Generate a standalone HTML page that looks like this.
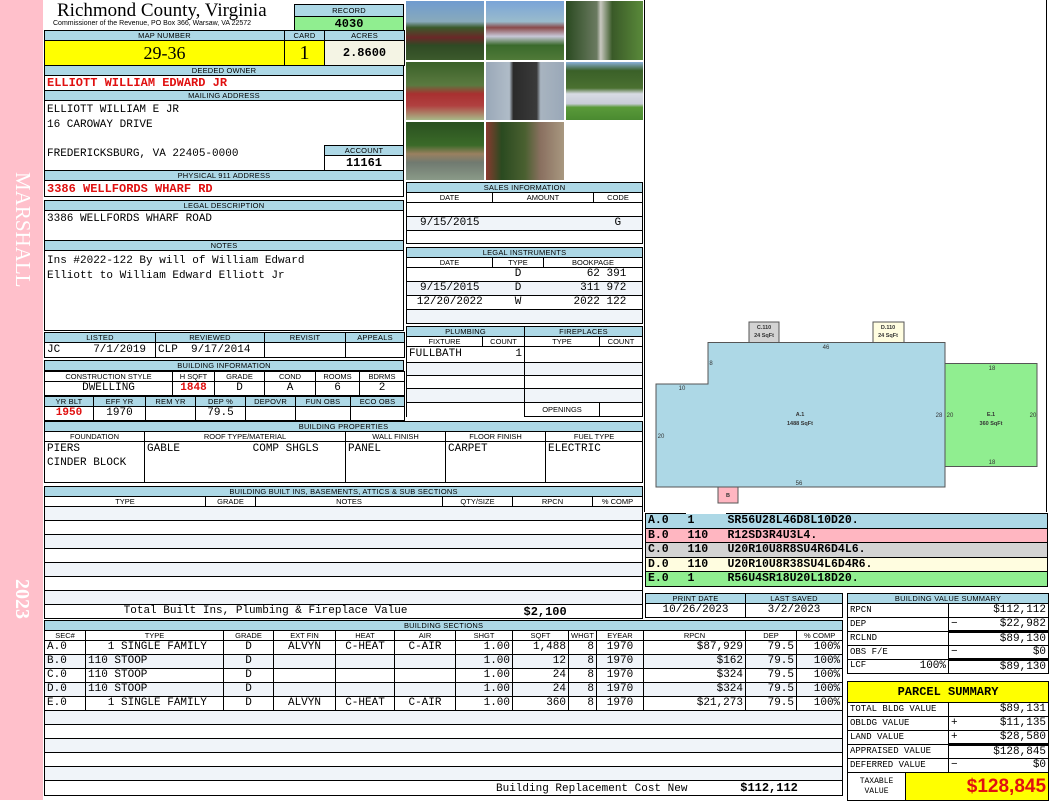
<!DOCTYPE html>
<html><head><meta charset="utf-8"><style>
*{box-sizing:border-box;margin:0;padding:0}
body{width:1050px;height:800px;position:relative;background:#fff;overflow:hidden;font-family:"Liberation Mono",monospace;font-size:11px;color:#000}
.a{position:absolute}
table{border-collapse:collapse;table-layout:fixed;width:100%}
td{border:1px solid #000;padding:0 2px;white-space:nowrap;overflow:hidden;vertical-align:middle;line-height:1}
.h td,td.h{background:#add8e6;font:7.5px "Liberation Sans",sans-serif;text-align:center;letter-spacing:.2px}
.s td{font:7.5px "Liberation Sans",sans-serif;text-align:center}
.r{text-align:right}.c{text-align:center}
.red{color:#e01010;font-weight:bold}
.lt td{background:#f0f4f9}
.ph{position:absolute;border:1px solid #fff}
.vt{position:absolute;writing-mode:vertical-rl;color:#fff;font-family:"Liberation Serif",serif;left:10px}
</style></head><body>
<div class="a" style="left:0;top:0;width:43px;height:800px;background:#ffc0cb"></div>
<div class="vt" style="top:172px;font-size:21px;letter-spacing:0px">MARSHALL</div>
<div class="vt" style="top:579px;font-size:20px;font-weight:bold">2023</div>

<div class="a" style="left:57px;top:1px;font:19px 'Liberation Serif',serif;line-height:20px">Richmond County, Virginia</div>
<div class="a" style="left:53px;top:20px;font:7px 'Liberation Sans',sans-serif">Commissioner of the Revenue, PO Box 366, Warsaw, VA 22572</div>
<div class="a" style="left:294px;top:4px;width:110px"><table><tr class="h" style="height:12px"><td>RECORD</td></tr><tr style="height:14px"><td class="c" style="background:#90ee90;font-weight:bold;font-size:12px">4030</td></tr></table></div>
<div class="a" style="left:44px;top:30px;width:360px"><table><col style="width:240px"><col style="width:40px"><col style="width:80px">
<tr class="h" style="height:10px"><td>MAP NUMBER</td><td>CARD</td><td>ACRES</td></tr>
<tr style="height:25px"><td class="c" style="background:#ffff00;font:18px 'Liberation Serif',serif">29-36</td><td class="c" style="background:#ffff00;font:20px 'Liberation Serif',serif">1</td><td class="c" style="background:#f4f4e4;font-weight:bold;font-size:12px">2.8600</td></tr></table></div>
<div class="a" style="left:44px;top:65px;width:360px"><table>
<tr class="h" style="height:10px"><td>DEEDED OWNER</td></tr>
<tr style="height:15px"><td class="red" style="font-size:12px">ELLIOTT WILLIAM EDWARD JR</td></tr>
<tr class="h" style="height:10px"><td>MAILING ADDRESS</td></tr>
<tr style="height:70px"><td></td></tr></table></div>
<div class="a" style="left:47px;top:103px;line-height:15px">ELLIOTT WILLIAM E JR<br>16 CAROWAY DRIVE</div>
<div class="a" style="left:47px;top:148px">FREDERICKSBURG, VA 22405-0000</div>
<div class="a" style="left:324px;top:145px;width:80px"><table><tr class="h" style="height:10px"><td>ACCOUNT</td></tr><tr style="height:15px"><td class="c" style="font-weight:bold;font-size:12px">11161</td></tr></table></div>
<div class="a" style="left:44px;top:170px;width:360px"><table><tr class="h" style="height:10px"><td>PHYSICAL 911 ADDRESS</td></tr><tr style="height:16px"><td class="red" style="font-size:12px">3386 WELLFORDS WHARF RD</td></tr></table></div>
<div class="a" style="left:44px;top:200px;width:360px"><table><tr class="h" style="height:10px"><td>LEGAL DESCRIPTION</td></tr><tr style="height:30px"><td style="vertical-align:top;padding-top:3px">3386 WELLFORDS WHARF ROAD</td></tr>
<tr class="h" style="height:10px"><td>NOTES</td></tr><tr style="height:80px"><td style="vertical-align:top;padding-top:3px;line-height:15px">Ins #2022-122 By will of William Edward<br>Elliott to William Edward Elliott Jr</td></tr></table></div>
<div class="a" style="left:44px;top:332px;width:360px"><table><col style="width:111px"><col style="width:109px"><col style="width:81px"><col style="width:59px">
<tr class="h" style="height:10px"><td>LISTED</td><td>REVIEWED</td><td>REVISIT</td><td>APPEALS</td></tr>
<tr style="height:15px"><td>JC&nbsp;&nbsp;&nbsp;&nbsp;&nbsp;7/1/2019</td><td>CLP&nbsp;&nbsp;9/17/2014</td><td></td><td></td></tr></table></div>
<div class="a" style="left:44px;top:360px;width:360px"><table><tr class="h" style="height:10px"><td>BUILDING INFORMATION</td></tr></table>
<table><col style="width:128px"><col style="width:42px"><col style="width:50px"><col style="width:51px"><col style="width:44px"><col style="width:45px">
<tr class="s" style="height:10px"><td>CONSTRUCTION STYLE</td><td>H SQFT</td><td>GRADE</td><td>COND</td><td>ROOMS</td><td>BDRMS</td></tr>
<tr class="c" style="height:14px"><td class="c">DWELLING</td><td class="c red">1848</td><td class="c">D</td><td class="c">A</td><td class="c">6</td><td class="c">2</td></tr></table>
<table><col style="width:49px"><col style="width:52px"><col style="width:50px"><col style="width:50px"><col style="width:50px"><col style="width:55px"><col style="width:54px">
<tr class="h" style="height:10px"><td>YR BLT</td><td>EFF YR</td><td>REM YR</td><td>DEP %</td><td>DEPOVR</td><td>FUN OBS</td><td>ECO OBS</td></tr>
<tr style="height:14px"><td class="c red">1950</td><td class="c">1970</td><td></td><td class="c">79.5</td><td></td><td></td><td></td></tr></table></div>
<div class="a" style="left:44px;top:421px;width:598px"><table><col style="width:100px"><col style="width:201px"><col style="width:100px"><col style="width:100px"><col style="width:97px">
<tr class="h" style="height:10px"><td colspan="5">BUILDING PROPERTIES</td></tr>
<tr class="s" style="height:10px"><td>FOUNDATION</td><td>ROOF TYPE/MATERIAL</td><td>WALL FINISH</td><td>FLOOR FINISH</td><td>FUEL TYPE</td></tr>
<tr style="height:41px;vertical-align:top"><td style="vertical-align:top;line-height:14px">PIERS<br>CINDER BLOCK</td><td style="vertical-align:top;line-height:14px">GABLE&nbsp;&nbsp;&nbsp;&nbsp;&nbsp;&nbsp;&nbsp;&nbsp;&nbsp;&nbsp;&nbsp;COMP SHGLS</td><td style="vertical-align:top;line-height:14px">PANEL</td><td style="vertical-align:top;line-height:14px">CARPET</td><td style="vertical-align:top;line-height:14px">ELECTRIC</td></tr></table></div>
<div class="a" style="left:44px;top:486px;width:598px"><table><col style="width:161px"><col style="width:50px"><col style="width:187px"><col style="width:70px"><col style="width:80px"><col style="width:50px">
<tr class="h" style="height:10px"><td colspan="6">BUILDING BUILT INS, BASEMENTS, ATTICS &amp; SUB SECTIONS</td></tr>
<tr class="s" style="height:10px"><td>TYPE</td><td>GRADE</td><td>NOTES</td><td>QTY/SIZE</td><td>RPCN</td><td>% COMP</td></tr>
<tr class="lt" style="height:14px"><td colspan="6"></td></tr><tr style="height:14px"><td colspan="6"></td></tr><tr class="lt" style="height:14px"><td colspan="6"></td></tr><tr style="height:14px"><td colspan="6"></td></tr><tr class="lt" style="height:14px"><td colspan="6"></td></tr><tr style="height:14px"><td colspan="6"></td></tr><tr class="lt" style="height:14px"><td colspan="6"></td></tr>
<tr style="height:14px"><td colspan="4" style="text-align:right;padding-right:105px;border-right:none">Total Built Ins, Plumbing &amp; Fireplace Value</td><td colspan="2" style="border-left:none;font-weight:bold;font-size:12px;padding-left:11px">$2,100</td></tr></table></div>
<div class="a" style="left:44px;top:620px;width:798px"><table>
<col style="width:41px"><col style="width:138px"><col style="width:50px"><col style="width:62px"><col style="width:59px"><col style="width:61px"><col style="width:57px"><col style="width:56px"><col style="width:28px"><col style="width:47px"><col style="width:102px"><col style="width:51px"><col style="width:46px">
<tr class="h" style="height:10px"><td colspan="13">BUILDING SECTIONS</td></tr>
<tr class="s" style="height:10px"><td>SEC#</td><td>TYPE</td><td>GRADE</td><td>EXT FIN</td><td>HEAT</td><td>AIR</td><td>SHGT</td><td>SQFT</td><td>WHGT</td><td>EYEAR</td><td>RPCN</td><td>DEP</td><td>% COMP</td></tr>
<tr style="height:14px"><td>A.0</td><td>&nbsp;&nbsp;&nbsp;1 SINGLE FAMILY</td><td class="c">D</td><td class="c">ALVYN</td><td class="c">C-HEAT</td><td class="c">C-AIR</td><td class="r">1.00</td><td class="r">1,488</td><td class="r">8</td><td class="c">1970</td><td class="r">$87,929</td><td class="r">79.5</td><td class="r">100%</td></tr>
<tr class="lt" style="height:14px"><td>B.0</td><td>110 STOOP</td><td class="c">D</td><td></td><td></td><td></td><td class="r">1.00</td><td class="r">12</td><td class="r">8</td><td class="c">1970</td><td class="r">$162</td><td class="r">79.5</td><td class="r">100%</td></tr>
<tr style="height:14px"><td>C.0</td><td>110 STOOP</td><td class="c">D</td><td></td><td></td><td></td><td class="r">1.00</td><td class="r">24</td><td class="r">8</td><td class="c">1970</td><td class="r">$324</td><td class="r">79.5</td><td class="r">100%</td></tr>
<tr class="lt" style="height:14px"><td>D.0</td><td>110 STOOP</td><td class="c">D</td><td></td><td></td><td></td><td class="r">1.00</td><td class="r">24</td><td class="r">8</td><td class="c">1970</td><td class="r">$324</td><td class="r">79.5</td><td class="r">100%</td></tr>
<tr style="height:14px"><td>E.0</td><td>&nbsp;&nbsp;&nbsp;1 SINGLE FAMILY</td><td class="c">D</td><td class="c">ALVYN</td><td class="c">C-HEAT</td><td class="c">C-AIR</td><td class="r">1.00</td><td class="r">360</td><td class="r">8</td><td class="c">1970</td><td class="r">$21,273</td><td class="r">79.5</td><td class="r">100%</td></tr>
<tr class="lt" style="height:14px"><td colspan="13"></td></tr><tr style="height:14px"><td colspan="13"></td></tr><tr class="lt" style="height:14px"><td colspan="13"></td></tr><tr style="height:14px"><td colspan="13"></td></tr><tr class="lt" style="height:14px"><td colspan="13"></td></tr>
<tr style="height:15px"><td colspan="13" style="padding-left:451px">Building Replacement Cost New&nbsp;&nbsp;&nbsp;&nbsp;&nbsp;&nbsp;&nbsp;&nbsp;<b style="font-size:12px">$112,112</b></td></tr></table></div>

<div class="ph" style="left:405px;top:0;width:80px;height:61px;background:linear-gradient(#6f9bd0 0,#8ab 35%,#3a5a2a 45%,#6a2828 62%,#2f4a24 75%,#3c5a2c)"></div>
<div class="ph" style="left:485px;top:0;width:80px;height:61px;background:linear-gradient(#7aa4d8 0,#9bc 35%,#8a4a4a 45%,#c8c8d8 60%,#3a6a2c 75%,#507a38)"></div>
<div class="ph" style="left:565px;top:0;width:79px;height:61px;background:linear-gradient(90deg,#2a4a20,#6a7a60 40%,#c8c8c0 45%,#3a5a28 60%,#5a8a3a)"></div>
<div class="ph" style="left:405px;top:61px;width:80px;height:60px;background:linear-gradient(#3a6028 0,#5a7a40 40%,#a83030 55%,#b04040 75%,#a8b888)"></div>
<div class="ph" style="left:485px;top:61px;width:80px;height:60px;background:linear-gradient(90deg,#9aa8b8,#b0bcc8 30%,#2a2a2a 35%,#3a3a3a 65%,#a8b4c0 70%,#9aa8b8)"></div>
<div class="ph" style="left:565px;top:61px;width:79px;height:60px;background:linear-gradient(#8ab0d8 0,#3a6028 15%,#4a7030 45%,#d8dce4 55%,#c8ccd8 72%,#5a9a3a 78%,#4a8a30)"></div>
<div class="ph" style="left:405px;top:121px;width:80px;height:60px;background:linear-gradient(#2a5020 0,#3a6a28 40%,#9a8060 55%,#707a70 70%,#8a9a88)"></div>
<div class="ph" style="left:485px;top:121px;width:80px;height:60px;background:linear-gradient(90deg,#8a3a30,#2a4a20 20%,#4a6030 50%,#8a7060 70%,#a89880)"></div>

<div class="a" style="left:406px;top:182px;width:236px"><table><col style="width:86px"><col style="width:101px"><col style="width:49px">
<tr class="h" style="height:10px"><td colspan="3">SALES INFORMATION</td></tr>
<tr class="s" style="height:10px"><td>DATE</td><td>AMOUNT</td><td>CODE</td></tr>
<tr style="height:14px"><td colspan="3"></td></tr>
<tr class="lt" style="height:14px"><td class="c" style="border-right:none">9/15/2015</td><td style="border:none;border-bottom:1px solid #000"></td><td class="c" style="border-left:none">G</td></tr>
<tr style="height:13px"><td colspan="3"></td></tr></table></div>
<div class="a" style="left:406px;top:247px;width:236px"><table><col style="width:86px"><col style="width:51px"><col style="width:99px">
<tr class="h" style="height:10px"><td colspan="3">LEGAL INSTRUMENTS</td></tr>
<tr class="s" style="height:10px"><td>DATE</td><td>TYPE</td><td>BOOKPAGE</td></tr>
<tr style="height:14px"><td style="border-right:none"></td><td class="c" style="border-left:none;border-right:none">D</td><td style="border-left:none;padding-left:30px">&nbsp;&nbsp;62&nbsp;391</td></tr>
<tr class="lt" style="height:14px"><td class="c" style="border-right:none">9/15/2015</td><td class="c" style="border-left:none;border-right:none">D</td><td style="border-left:none;padding-left:30px">&nbsp;311&nbsp;972</td></tr>
<tr style="height:14px"><td class="c" style="border-right:none">12/20/2022</td><td class="c" style="border-left:none;border-right:none">W</td><td style="border-left:none;padding-left:30px">2022&nbsp;122</td></tr>
<tr class="lt" style="height:14px"><td colspan="3"></td></tr></table></div>
<div class="a" style="left:406px;top:326px;width:118px"><table><col style="width:76px"><col style="width:42px">
<tr class="h" style="height:10px"><td colspan="2">PLUMBING</td></tr>
<tr class="s" style="height:10px"><td>FIXTURE</td><td>COUNT</td></tr>
<tr style="height:16px"><td style="border-right:none">FULLBATH</td><td class="r" style="border-left:none">1</td></tr>
<tr class="lt" style="height:13px"><td colspan="2"></td></tr><tr style="height:13px"><td colspan="2"></td></tr><tr class="lt" style="height:14px"><td colspan="2"></td></tr><tr style="height:14px"><td colspan="2" style="border:none;border-left:1px solid #000"></td></tr></table></div>
<div class="a" style="left:524px;top:326px;width:118px"><table><col style="width:75px"><col style="width:43px">
<tr class="h" style="height:10px"><td colspan="2">FIREPLACES</td></tr>
<tr class="s" style="height:10px"><td>TYPE</td><td>COUNT</td></tr>
<tr style="height:16px"><td colspan="2"></td></tr><tr class="lt" style="height:13px"><td colspan="2"></td></tr><tr style="height:13px"><td colspan="2"></td></tr><tr class="lt" style="height:14px"><td colspan="2"></td></tr>
<tr class="s" style="height:14px"><td>OPENINGS</td><td></td></tr></table></div>

<div class="a" style="left:1046px;top:0;width:1px;height:512px;background:#000"></div>
<div class="a" style="left:644px;top:0;width:1px;height:512px;background:#000"></div>
<svg class="a" style="left:0;top:0" width="1050" height="512">
<g stroke="#555" stroke-width="1">
<polygon points="656,384 656,487 945,487 945,342.5 708,342.5 708,384" fill="#add8e6"/>
<rect x="945" y="363.5" width="92" height="103" fill="#90ee90"/>
<rect x="749" y="322" width="30" height="20.5" fill="#d3d3d3"/>
<rect x="873" y="322" width="31" height="20.5" fill="#fffde0"/>
<rect x="718" y="487" width="20" height="16" fill="#ffb6c1"/>
</g>
<g font-family="Liberation Sans,sans-serif" font-size="6" fill="#333" text-anchor="middle">
<text x="826" y="349">46</text><text x="711" y="365">8</text><text x="682" y="390">10</text><text x="661" y="438">20</text><text x="799" y="485">56</text><text x="939" y="417">28</text><text x="950" y="417">20</text><text x="1033" y="417">20</text><text x="992" y="370">18</text><text x="992" y="464">18</text>
<g font-weight="bold" font-size="5.5"><text x="800" y="416">A.1</text><text x="800" y="425">1488 SqFt</text><text x="991" y="416">E.1</text><text x="991" y="425">360 SqFt</text>
<text x="764" y="329">C.110</text><text x="764" y="337">24 SqFt</text><text x="888" y="329">D.110</text><text x="888" y="337">24 SqFt</text><text x="728" y="497">B</text></g>
</g></svg>

<div class="a" style="left:645px;top:513px;width:403px;font-weight:bold;font-size:11.5px"><table><col style="width:40px"><col style="width:40px"><col>
<tr style="height:15px;background:#add8e6"><td style="border-right:none">A.0</td><td style="border:none;border-bottom:1px solid #000">1</td><td style="border-left:none">SR56U28L46D8L10D20.</td></tr>
<tr style="height:14px;background:#ffb6c1"><td style="border-right:none">B.0</td><td style="border:none;border-bottom:1px solid #000">110</td><td style="border-left:none">R12SD3R4U3L4.</td></tr>
<tr style="height:15px;background:#d3d3d3"><td style="border-right:none">C.0</td><td style="border:none;border-bottom:1px solid #000">110</td><td style="border-left:none">U20R10U8R8SU4R6D4L6.</td></tr>
<tr style="height:14px;background:#fffde0"><td style="border-right:none">D.0</td><td style="border:none;border-bottom:1px solid #000">110</td><td style="border-left:none">U20R10U8R38SU4L6D4R6.</td></tr>
<tr style="height:15px;background:#90ee90"><td style="border-right:none">E.0</td><td style="border:none;border-bottom:1px solid #000">1</td><td style="border-left:none">R56U4SR18U20L18D20.</td></tr></table></div>

<div class="a" style="left:645px;top:593px;width:197px"><table><col style="width:100px"><col style="width:97px">
<tr class="h" style="height:10px"><td>PRINT DATE</td><td>LAST SAVED</td></tr>
<tr style="height:14px"><td class="c">10/26/2023</td><td class="c">3/2/2023</td></tr></table></div>
<div class="a" style="left:847px;top:593px;width:201px;font-size:9px"><table><col style="width:101px"><col style="width:100px">
<tr class="h" style="height:10px"><td colspan="2">BUILDING VALUE SUMMARY</td></tr>
<tr style="height:14px"><td>RPCN</td><td class="r" style="font-size:11px">$112,112</td></tr>
<tr style="height:14px"><td>DEP</td><td class="r" style="font-size:11px;border-bottom:3px solid #000"><span style="float:left">&minus;</span>$22,982</td></tr>
<tr style="height:14px"><td>RCLND</td><td class="r" style="font-size:11px">$89,130</td></tr>
<tr style="height:14px"><td>OBS F/E</td><td class="r" style="font-size:11px;border-bottom:3px solid #000"><span style="float:left">&minus;</span>$0</td></tr>
<tr style="height:14px"><td>LCF<span style="float:right;font-size:11px">100%</span></td><td class="r" style="font-size:11px">$89,130</td></tr></table></div>
<div class="a" style="left:847px;top:681px;width:201px;font-size:9px"><table><col style="width:58px"><col style="width:43px"><col style="width:100px">
<tr style="height:21px"><td colspan="3" class="c" style="background:#ffff00;font-weight:bold;font-size:12px">PARCEL SUMMARY</td></tr>
<tr style="height:14px"><td colspan="2">TOTAL BLDG VALUE</td><td class="r" style="font-size:11px">$89,131</td></tr>
<tr style="height:14px"><td colspan="2">OBLDG VALUE</td><td class="r" style="font-size:11px"><span style="float:left">+</span>$11,135</td></tr>
<tr style="height:14px"><td colspan="2">LAND VALUE</td><td class="r" style="font-size:11px;border-bottom:3px solid #000"><span style="float:left">+</span>$28,580</td></tr>
<tr style="height:14px"><td colspan="2">APPRAISED VALUE</td><td class="r" style="font-size:11px">$128,845</td></tr>
<tr style="height:14px"><td colspan="2">DEFERRED VALUE</td><td class="r" style="font-size:11px"><span style="float:left">&minus;</span>$0</td></tr>
<tr style="height:28px"><td class="c" style="font-size:8px;line-height:10px">TAXABLE<br>VALUE</td><td colspan="2" class="r" style="background:#ffff00;color:#e01010;font:bold 19px 'Liberation Sans',sans-serif">$128,845</td></tr></table></div>
</body></html>
